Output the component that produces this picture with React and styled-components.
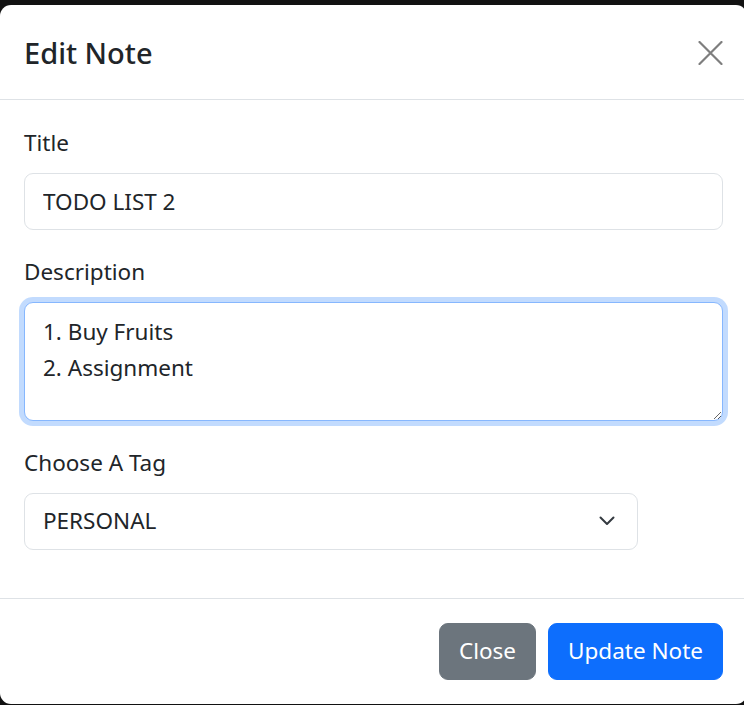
import React from "react"
import styled, { createGlobalStyle } from "styled-components"

const GlobalStyle = createGlobalStyle`
  html, body {
    margin: 0;
    padding: 0;
    background: #121212;
    overflow: hidden;
  }
  * {
    box-sizing: border-box;
  }
`

const Backdrop = styled.div`
  width: 744px;
  height: 705px;
  padding-top: 5px;
  overflow: hidden;
  font-family: "Noto Sans", "Open Sans", sans-serif;
  color: #212529;
`

const Modal = styled.div`
  width: 747px;
  height: 699px;
  background: #fff;
  border-radius: 11px;
  display: flex;
  flex-direction: column;
`

const Header = styled.div`
  display: flex;
  align-items: center;
  justify-content: space-between;
  padding: 25px 24px 23.5px 24px;
  border-bottom: 1.5px solid #dee2e6;
`

const Title = styled.h5`
  margin: 0;
  font-size: 29px;
  font-weight: 500;
  line-height: 45px;
`

const CloseX = styled.button`
  width: 25px;
  height: 24px;
  padding: 0;
  border: none;
  background: transparent;
  opacity: 0.5;
  display: flex;
  cursor: pointer;
`

const Body = styled.div`
  padding: 25px 24px 0 24px;
`

const Group = styled.div`
  margin-bottom: 24px;
  width: ${(p) => p.width || "100%"};
`

const Label = styled.label`
  display: block;
  font-size: 22.5px;
  line-height: 36px;
  margin-bottom: 12px;
`

const fieldBase = `
  display: block;
  width: 100%;
  font-family: "Noto Sans", "Open Sans", sans-serif;
  font-size: 22.5px;
  line-height: 36px;
  color: #212529;
  background: #fff;
  border: 1.5px solid #dee2e6;
  border-radius: 9px;
  outline: none;
`

const Input = styled.input`
  ${fieldBase}
  height: 57px;
  padding: 9px 18px;
`

const TextArea = styled.textarea`
  ${fieldBase}
  height: 119px;
  padding: 11px 18px 9px 18px;
  resize: vertical;
  border-color: #86b7fe;
  box-shadow: 0 0 0 5px rgba(13, 110, 253, 0.25);
`

const SelectWrap = styled.div`
  position: relative;
`

const Select = styled.select`
  ${fieldBase}
  height: 57px;
  padding: 9px 54px 9px 18px;
  appearance: none;
`

const Chevron = styled.svg`
  position: absolute;
  right: 23px;
  top: 50%;
  transform: translateY(-50%);
  pointer-events: none;
`

const Footer = styled.div`
  display: flex;
  justify-content: flex-end;
  align-items: center;
  padding: 18px 24px 18px 18px;
  border-top: 1.5px solid #dee2e6;
  margin-top: 24px;
  gap: 12px;
`

const Button = styled.button`
  height: 57px;
  margin: 6px 0;
  padding: 9px 19px;
  font-family: "Noto Sans", "Open Sans", sans-serif;
  font-size: 22.5px;
  line-height: 36px;
  color: #fff;
  background: ${(p) => (p.primary ? "#0d6efd" : "#6c757d")};
  border: 1.5px solid ${(p) => (p.primary ? "#0d6efd" : "#6c757d")};
  border-radius: 9px;
  cursor: pointer;
`

export default function App() {
  return (
    <>
      <GlobalStyle />
      <Backdrop>
        <Modal>
          <Header>
            <Title>Edit Note</Title>
            <CloseX aria-label="Close">
              <svg width="25" height="24" viewBox="0 0 25 24">
                <path d="M1.5 1 L23.5 23 M23.5 1 L1.5 23" stroke="#000" strokeWidth="2.2" strokeLinecap="round" fill="none" />
              </svg>
            </CloseX>
          </Header>
          <Body>
            <Group>
              <Label htmlFor="title">Title</Label>
              <Input id="title" type="text" defaultValue="TODO LIST 2" />
            </Group>
            <Group>
              <Label htmlFor="description">Description</Label>
              <TextArea id="description" defaultValue={"1. Buy Fruits\n2. Assignment"} />
            </Group>
            <Group width="614px">
              <Label htmlFor="tag">Choose A Tag</Label>
              <SelectWrap>
                <Select id="tag" defaultValue="PERSONAL">
                  <option>PERSONAL</option>
                  <option>WORK</option>
                  <option>GENERAL</option>
                </Select>
                <Chevron width="16" height="10" viewBox="0 0 16 10">
                  <path d="M1.5 1.5 8 8 14.5 1.5" fill="none" stroke="#343a40" strokeWidth="2" strokeLinecap="round" strokeLinejoin="round" />
                </Chevron>
              </SelectWrap>
            </Group>
          </Body>
          <Footer>
            <Button type="button">Close</Button>
            <Button type="button" primary>Update Note</Button>
          </Footer>
        </Modal>
      </Backdrop>
    </>
  )
}
